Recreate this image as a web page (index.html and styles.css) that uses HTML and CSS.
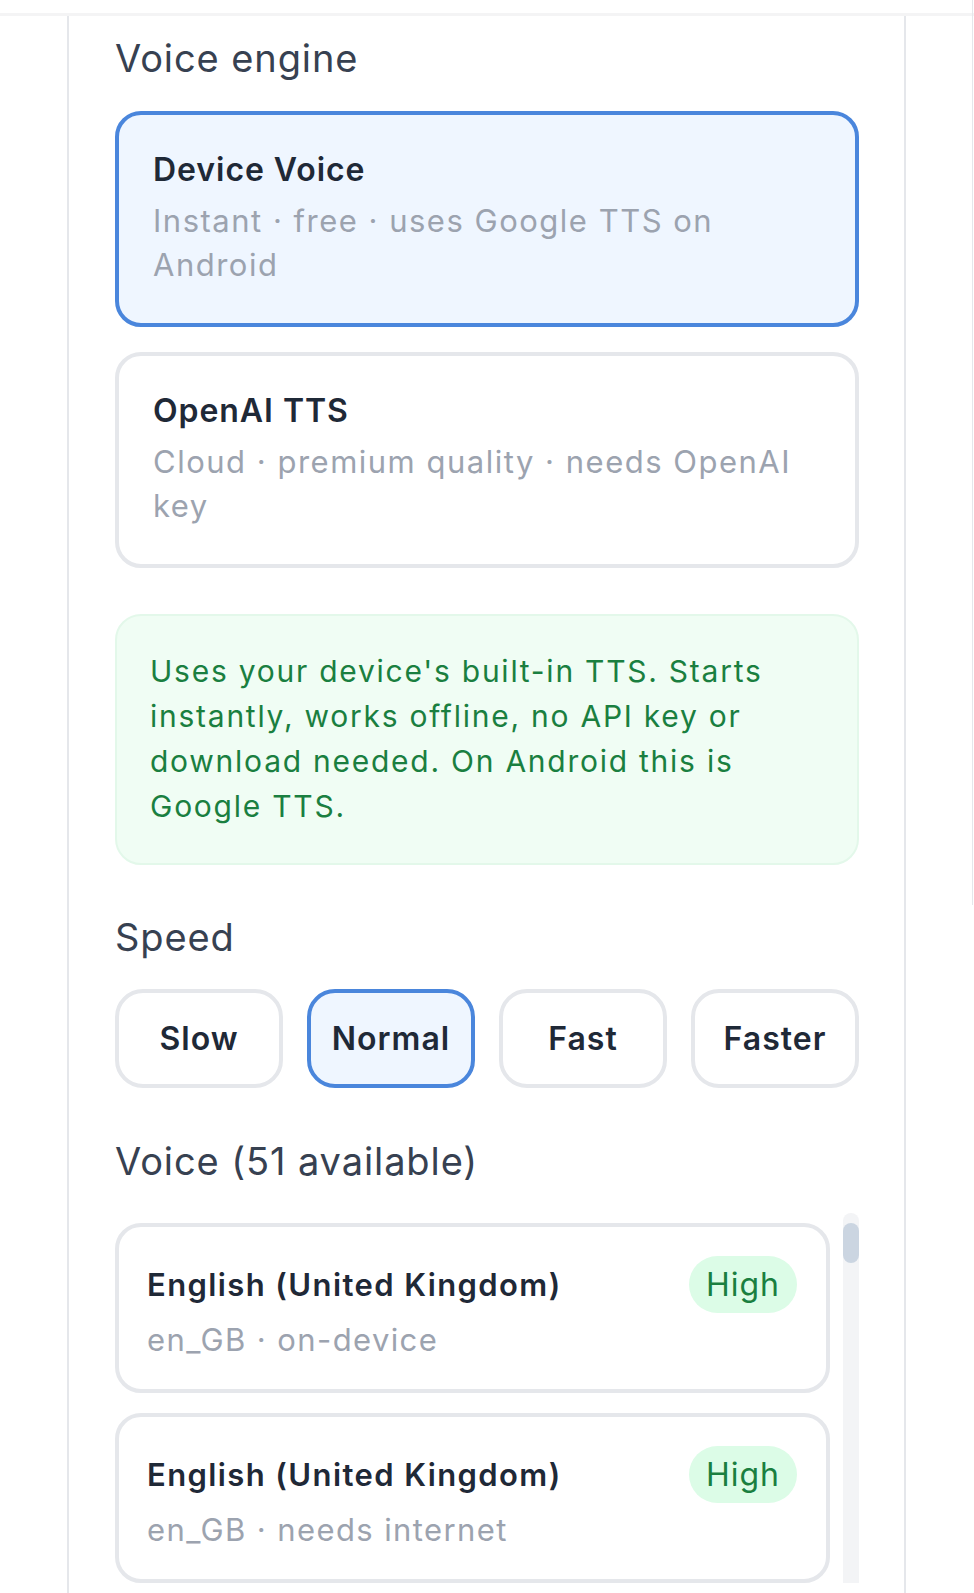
FILE: index.html
```html
<!DOCTYPE html>
<html lang="en">
<head>
    <meta charset="UTF-8">
    <meta name="viewport" content="width=device-width, initial-scale=1.0">
    <title>Voice settings</title>
    <link rel="stylesheet" href="styles.css">
</head>
<body>
    <div class="topbar"></div>
    <div class="page-rail"></div>

    <main class="panel">
        <h2 class="section-title">Voice engine</h2>
        <div class="engine-list">
            <button class="engine selected">
                <span class="engine-name">Device Voice</span>
                <span class="engine-desc">Instant · free · uses Google TTS on Android</span>
            </button>
            <button class="engine">
                <span class="engine-name">OpenAI TTS</span>
                <span class="engine-desc">Cloud · premium quality · needs OpenAI key</span>
            </button>
        </div>

        <div class="info">
            Uses your device's built-in TTS. Starts instantly, works offline, no API key or download needed. On Android this is Google TTS.
        </div>

        <h2 class="section-title speed-title">Speed</h2>
        <div class="speeds">
            <button class="speed">Slow</button>
            <button class="speed selected">Normal</button>
            <button class="speed">Fast</button>
            <button class="speed">Faster</button>
        </div>

        <h2 class="section-title voice-title">Voice (51 available)</h2>
        <div class="voice-scroll">
            <div class="voices">
                <div class="voice">
                    <div class="voice-top">
                        <span class="voice-name">English (United Kingdom)</span>
                        <span class="badge">High</span>
                    </div>
                    <div class="voice-meta">en_GB · on-device</div>
                </div>
                <div class="voice">
                    <div class="voice-top">
                        <span class="voice-name">English (United Kingdom)</span>
                        <span class="badge">High</span>
                    </div>
                    <div class="voice-meta">en_GB · needs internet</div>
                </div>
            </div>
            <div class="scroll-track"><div class="scroll-thumb"></div></div>
        </div>
    </main>
</body>
</html>
```

FILE: styles.css
```css
html, body {
    height: 1593px;
    overflow: hidden;
}
body {
    margin: 0;
    background: #fff;
    font-family: Inter, "Noto Sans", sans-serif;
    color: #1f2937;
}
button {
    font-family: inherit;
}
.topbar {
    height: 13px;
    border-bottom: 3px solid #f4f4f5;
}
.page-rail {
    position: fixed;
    top: 0;
    right: 1px;
    width: 1px;
    height: 905px;
    background: #e5e7eb;
}
.panel {
    margin-left: 67px;
    width: 839px;
    box-sizing: border-box;
    min-height: 1600px;
    border-left: 2px solid #e5e7eb;
    border-right: 2px solid #e5e7eb;
    padding: 20px 45px 0 46px;
}
.section-title {
    margin: 0;
    font-size: 38px;
    line-height: 44px;
    font-weight: 400;
    letter-spacing: 0.9px;
    color: #374151;
}
.engine-list {
    display: flex;
    flex-direction: column;
    gap: 25px;
    margin-top: 31px;
}
.engine {
    display: flex;
    flex-direction: column;
    align-items: flex-start;
    text-align: left;
    background: #fff;
    border: 4px solid #e5e7eb;
    border-radius: 26px;
    padding: 33px 34px 36px 34px;
    cursor: pointer;
}
.engine.selected {
    background: #eff6ff;
    border-color: #4a86dc;
}
.engine-name {
    font-size: 32px;
    line-height: 44px;
    font-weight: 600;
    letter-spacing: 0.95px;
    color: #1f2937;
}
.engine-desc {
    margin-top: 7px;
    font-size: 31px;
    line-height: 44px;
    letter-spacing: 1.5px;
    color: #9ca3af;
}
.info {
    margin-top: 46px;
    background: #f0fdf4;
    border: 2px solid #e3f8ea;
    border-radius: 26px;
    padding: 33px 34px 34px 33px;
    font-size: 30px;
    line-height: 45px;
    letter-spacing: 1.75px;
    color: #1a7f40;
}
.speed-title {
    margin-top: 50px;
}
.speeds {
    display: grid;
    grid-template-columns: repeat(4, 1fr);
    gap: 24px;
    margin-top: 30px;
}
.speed {
    height: 99px;
    font-size: 32px;
    font-weight: 600;
    letter-spacing: 1px;
    color: #1f2937;
    background: #fff;
    border: 4px solid #e5e7eb;
    border-radius: 28px;
    cursor: pointer;
}
.speed.selected {
    background: #eff6ff;
    border-color: #4a86dc;
}
.voice-title {
    margin-top: 51px;
}
.voice-scroll {
    display: flex;
    gap: 13px;
    margin-top: 30px;
}
.voices {
    flex: 1;
    display: flex;
    flex-direction: column;
    gap: 20px;
    padding-top: 10px;
}
.voice {
    border: 4px solid #e5e7eb;
    border-radius: 26px;
    padding: 29px 29px 27px 28px;
}
.voice-top {
    display: flex;
    justify-content: space-between;
    align-items: center;
}
.voice-name {
    font-size: 31px;
    line-height: 44px;
    font-weight: 600;
    letter-spacing: 1.4px;
    color: #1f2937;
}
.badge {
    height: 57px;
    line-height: 57px;
    padding: 0 17px;
    border-radius: 29px;
    background: #dcfce7;
    color: #1a7f40;
    font-size: 32px;
    letter-spacing: 1px;
}
.voice-meta {
    margin-top: 5px;
    font-size: 31px;
    line-height: 44px;
    letter-spacing: 1.4px;
    color: #9ca3af;
}
.scroll-track {
    width: 16px;
    flex-shrink: 0;
    background: #f3f4f6;
    border-radius: 8px 8px 0 0;
    padding-top: 10px;
}
.scroll-thumb {
    height: 40px;
    border-radius: 8px;
    background: #cbd5e1;
}
```
